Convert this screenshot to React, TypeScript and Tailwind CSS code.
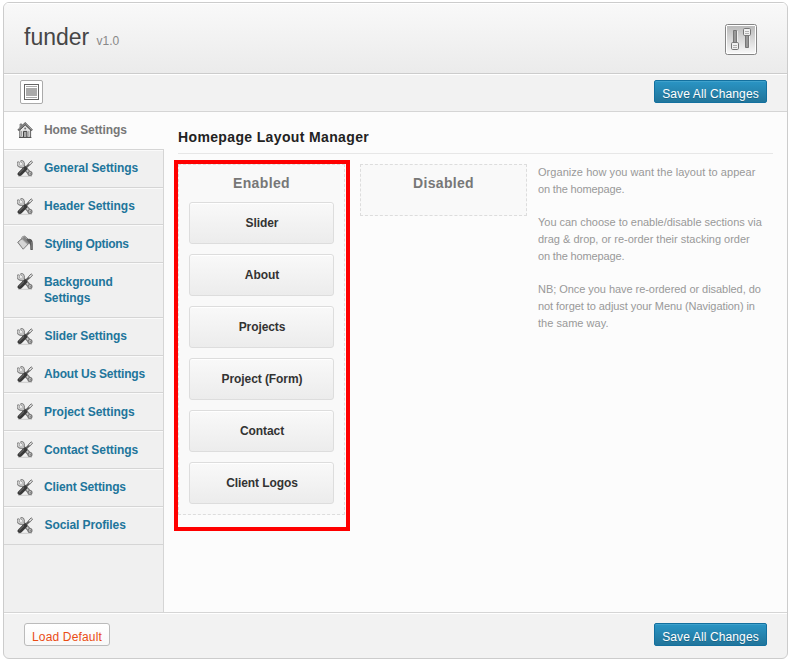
import React from "react";

function ToolsIcon() {
  return (
    <svg className="block h-[17px] w-4" viewBox="0 0 16 17" fill="none">
      <path d="M5 5.2 12.8 13.4" stroke="#777" strokeWidth="4" />
      <path d="M1.4 2.7C.2 5.3 3.3 7.3 5.5 6 7.2 4.7 6.8 1.9 4.7 1.3" stroke="#858585" strokeWidth="2.8" strokeLinecap="round" />
      <path d="M1.5 2.9C.5 5 3.4 6.8 5.2 5.6 6.6 4.4 6.4 2.4 4.9 1.6" stroke="#d0d0d0" strokeWidth="1.4" strokeLinecap="round" />
      <path d="M5 5.2 12.8 13.4" stroke="#c6c6c6" strokeWidth="1.8" />
      <circle cx="13" cy="13.5" r="1.9" fill="#ddd" stroke="#777" strokeWidth="1.3" />
      <circle cx="13.2" cy="13.8" r=".8" fill="#777" />
      <path d="M8.5 8 13 3.4" stroke="#5e5e5e" strokeWidth="2.2" />
      <path d="m11.6 3.4 2.6-2.6 1.4 1.3-2.3 2.7-1.4.2Z" fill="#ddd" stroke="#777" strokeWidth="1" />
      <path d="M8 8.7 2.8 14" stroke="#393939" strokeWidth="4.4" strokeLinecap="round" />
      <path d="M7 8.5 2.2 13.3" stroke="#888" strokeWidth=".8" />
      <path d="M1 16.3h14" stroke="#bbb" strokeWidth=".7" />
    </svg>
  );
}

function HomeIcon() {
  return (
    <svg className="block size-4" viewBox="0 0 16 16" fill="none">
      <path d="M3 2h2v4H3z" fill="#aaa" stroke="#666" strokeWidth=".7" />
      <path d="M2.8 8v7.2h10.8V8L8.2 3Z" fill="#e6e6e6" stroke="#606060" strokeWidth="1" />
      <path d="M1.1 8.4 8.2 1.5l7 6.9" stroke="#555" strokeWidth="2" />
      <path d="M1.6 7.7 8.2 1.5l6.5 6.2" stroke="#bbb" strokeWidth=".8" />
      <path d="M6.5 15V9.4h3.4V15" fill="#aaa" stroke="#444" strokeWidth="1" />
      <path d="M4.6 9v5M11.8 9v5" stroke="#888" strokeWidth=".8" />
      <circle cx="8.2" cy="6.4" r="1" fill="#777" />
      <path d="M2 15.5h12.4" stroke="#555" />
    </svg>
  );
}

function PaintIcon() {
  return (
    <svg className="block size-4" viewBox="0 0 16 16" fill="none">
      <path d="m.7 7.3 7-6.2 6 5.3-7.5 7.8Z" fill="#b2b2b2" stroke="#737373" strokeWidth=".9" />
      <path d="m1.7 7.3 3-2.7 5.4 5-3.9 3.9Z" fill="#d6d6d6" />
      <path d="m7.5 2.1 5.1 4.6-2 2-5-4.8Z" fill="#858585" />
      <path d="M4.7 4.9c-.7-5 3.8-4.8 4 .5" stroke="#888" strokeWidth=".8" />
      <path d="M9.3 4.4c4.2-1.6 6.5.2 6.5 4.1V15h-2.3c-.6-2.2.5-5.3-1.8-7.3Z" fill="#5a5a5a" />
      <path d="M14.6 7v7" stroke="#8b8b8b" strokeWidth=".6" />
    </svg>
  );
}

function SlidersIcon() {
  return (
    <svg className="block h-[31px] w-8" viewBox="0 0 32 31" fill="none">
      <defs>
        <linearGradient id="metal" x1="0" y1="0" x2="0" y2="1">
          <stop stopColor="#bbb" />
          <stop offset="1" stopColor="#f7f7f7" />
        </linearGradient>
      </defs>
      <rect x=".5" y=".5" width="31" height="30" rx="2" fill="#fff" stroke="#858585" />
      <rect x="2" y="2" width="28" height="27" fill="url(#metal)" />
      <path d="M8.5 6.5h3v13h-3zM20.5 10.5h3v13h-3z" fill="#999" stroke="#777" />
      <path d="M12.5 7v12M24.5 12v12" stroke="#eee" />
      <rect x="6.5" y="18.5" width="7" height="7" rx="1.2" fill="#f1f1f1" stroke="#777" />
      <rect x="18.5" y="4.5" width="7" height="7" rx="1.2" fill="#f1f1f1" stroke="#777" />
      <path d="M8 21.5h4M8 23.5h4M20 7.5h4M20 9.5h4" stroke="#b3b3b3" />
    </svg>
  );
}

const navigation = [
  { label: "General Settings", size: "h-[38px]", text: "tracking-[-0.08px]" },
  { label: "Header Settings", size: "h-[37px]", text: "tracking-[-0.04px]" },
  { label: "Styling Options", size: "h-[38px]", text: "pt-px pl-[0.5px] tracking-[-0.3px]" },
  { label: "Background Settings", size: "h-[55px]", text: "pt-px tracking-[-0.14px]" },
  { label: "Slider Settings", size: "h-[38px]", text: "pl-[0.5px] tracking-[-0.12px]" },
  { label: "About Us Settings", size: "h-[37px]", text: "tracking-[-0.18px]" },
  { label: "Project Settings", size: "h-[38px]", text: "pt-px tracking-[-0.04px]" },
  { label: "Contact Settings", size: "h-[38px]", text: "pt-px tracking-[-0.08px]" },
  { label: "Client Settings", size: "h-[38px]", text: "tracking-[-0.14px]" },
  { label: "Social Profiles", size: "h-[38px]", text: "pl-[0.5px] tracking-[-0.1px]" },
];

const sections = ["Slider", "About", "Projects", "Project (Form)", "Contact", "Client Logos"];

function SaveButton() {
  return (
    <button className="h-[23px] w-[113px] whitespace-nowrap rounded-[2px] border border-[#13709f] bg-linear-to-b from-[#2a95c5] to-[#21759b] pt-[5px] text-[12px] leading-[16px] tracking-[0.12px] text-white shadow-[inset_0_1px_0_#3fa1cb] [text-shadow:0_1px_0_#0003]">
      Save All Changes
    </button>
  );
}

export default function App() {
  return (
    <div className="h-[667px] w-[794px] bg-white pl-[3px] pt-[2px] font-['Liberation_Sans',Arial,sans-serif]">
      <div className="flex h-[657px] w-[785px] flex-col overflow-hidden rounded-[6px] border border-[#ccc] bg-[#f2f2f2]">
        <header className="flex h-[71px] shrink-0 justify-between border-b border-[#ccc] bg-linear-to-b from-[#f9f9f9] to-[#ebebeb] pl-5 pr-[30px] shadow-[inset_0_1px_0_white]">
          <h1 className="pt-[20px] text-[23px] leading-[28px] text-[#464646]">
            funder <span className="ml-px text-[12px] text-[#888]">v1.0</span>
          </h1>
          <div className="pt-[21px]"><SlidersIcon /></div>
        </header>
        <div className="flex h-[38px] shrink-0 items-start justify-between border-b border-[#d5d5d5] pl-4 pr-5 pt-[6px] shadow-[inset_0_1px_0_white]">
          <button aria-label="Toggle layout" className="flex h-6 w-[23px] items-center justify-center rounded-[2px] border border-[#aaa] bg-white">
            <span className="flex h-4 w-[15px] items-center justify-center border border-[#666] bg-white">
              <span className="h-3 w-[11px] border-y border-[#aaa] bg-white py-px"><span className="block h-2 bg-[#aaa]" /></span>
            </span>
          </button>
          <SaveButton />
        </div>
        <div className="flex h-[500px] shrink-0 bg-[#fcfcfc]">
          <nav className="flex w-40 shrink-0 flex-col border-r border-[#d5d5d5] bg-[#f0f0f0] text-[12px] font-bold leading-4">
            <a className="-mr-px flex h-[38px] shrink-0 items-start border-b border-[#d5d5d5] bg-[#fcfcfc] pl-[13px] pt-[10px] text-[#777]">
              <HomeIcon /><span className="ml-[11px] tracking-[-0.1px]">Home Settings</span>
            </a>
            {navigation.map((item) => (
              <a key={item.label} className={`flex shrink-0 items-start border-b border-[#d5d5d5] pl-[13px] pt-[10px] text-[#21759b] shadow-[inset_0_1px_0_#fafafa] ${item.size}`}>
                {item.label === "Styling Options" ? <PaintIcon /> : <ToolsIcon />}
                <span className={`ml-[11px] w-[108px] ${item.text}`}>{item.label}</span>
              </a>
            ))}
          </nav>
          <main className="w-[623px] pl-[14px] pr-[14px]">
            <h2 className="h-[42px] border-b border-[#e7e7e7] pt-[16px] text-[14px] font-bold leading-[18px] tracking-[0.36px] text-[#222]">Homepage Layout Manager</h2>
            <div className="flex items-start pt-[6px]">
              <div className="-ml-1 h-[371px] w-[176px] shrink-0 border-4 border-[#f00] bg-[#fcfcfc]">
                <section className="flex h-[351px] w-[167px] flex-col items-center border border-dashed border-[#ddd] bg-[#f9f9f9] pt-[9px]">
                  <h3 className="mb-[10px] text-[14px] font-bold leading-[18px] tracking-[0.36px] text-[#777]">Enabled</h3>
                  <div className="flex flex-col gap-[10px]">
                    {sections.map((section) => (
                      <button key={section} className="h-[42px] w-[145px] rounded-[3px] border border-[#ddd] bg-linear-to-b from-[#f9f9f9] to-[#ececec] pl-px text-[12px] font-bold tracking-[-0.08px] text-[#333] shadow-[inset_0_1px_0_white]">{section}</button>
                    ))}
                  </div>
                </section>
              </div>
              <section className="ml-[10px] mt-[4px] h-[52px] w-[167px] shrink-0 border border-dashed border-[#ddd] bg-[#f9f9f9] pt-[9px] text-center">
                <h3 className="text-[14px] font-bold leading-[18px] tracking-[0.3px] text-[#777]">Disabled</h3>
              </section>
              <div className="ml-[11px] mt-[4px] whitespace-nowrap text-[11px] leading-[16.8px] text-[#999]">
                <p><span className="tracking-[0.05px]">Organize how you want the layout to appear</span><br /><span className="tracking-[-0.15px]">on the homepage.</span></p>
                <p className="mt-[16.5px]"><span className="tracking-[-0.02px]">You can choose to enable/disable sections via</span><br /><span className="tracking-[-0.01px]">drag &amp; drop, or re-order their stacking order</span><br /><span className="tracking-[-0.15px]">on the homepage.</span></p>
                <p className="mt-[16.5px]"><span className="tracking-[-0.05px]">NB; Once you have re-ordered or disabled, do</span><br /><span className="tracking-[-0.07px]">not forget to adjust your Menu (Navigation) in</span><br /><span className="tracking-[0.03px]">the same way.</span></p>
              </div>
            </div>
          </main>
        </div>
        <footer className="flex grow items-start justify-between border-t border-[#d5d5d5] pl-5 pr-5 pt-[10px] shadow-[inset_0_1px_0_white]">
          <button className="h-[23px] w-[86px] whitespace-nowrap rounded-[3px] border border-[#bbb] bg-linear-to-b from-white to-[#f8f8f8] pt-[5px] text-[12px] leading-[16px] tracking-[0.17px] text-[#ea4c14]">Load Default</button>
          <SaveButton />
        </footer>
      </div>
    </div>
  );
}
